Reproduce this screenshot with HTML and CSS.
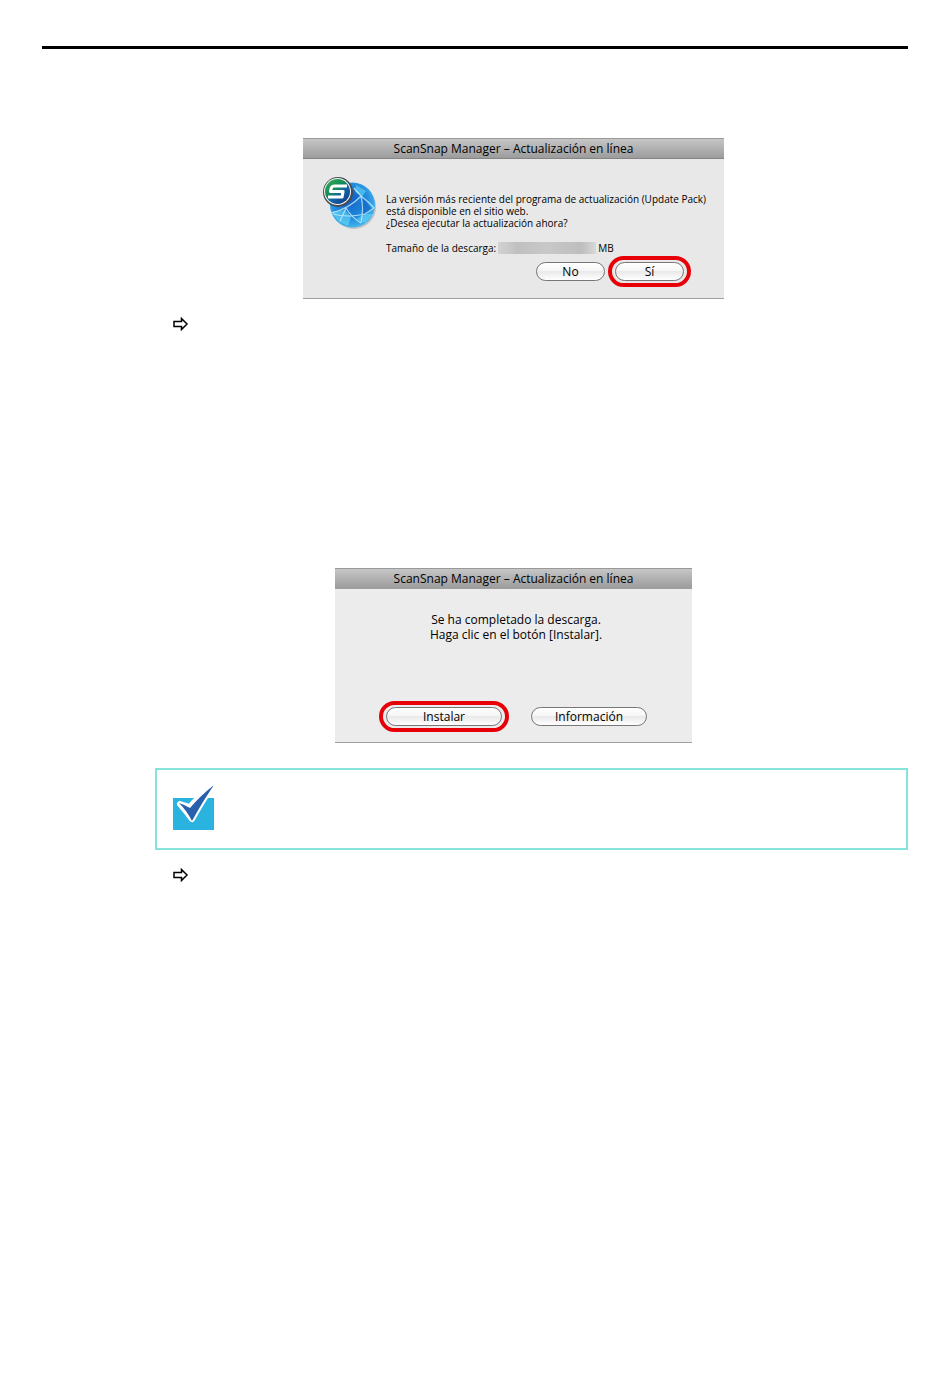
FILE: index.html
```html
<!DOCTYPE html>
<html lang="es">
<head>
<meta charset="UTF-8">
<meta name="viewport" content="width=device-width, initial-scale=1.0">
<title>ScanSnap Manager – Actualización en línea</title>
<link rel="stylesheet" href="styles.css">
</head>
<body>

<hr class="rule">

<main class="content">
    <section class="step">
        <div class="dialog dialog-update">
            <div class="titlebar">ScanSnap Manager – Actualización en línea</div>
            <div class="dialog-body">
                <svg class="globe" viewBox="0 0 56 56" aria-hidden="true">
                    <defs>
                        <radialGradient id="sea" cx="45%" cy="42%" r="60%">
                            <stop offset="0" stop-color="#1467c8"/>
                            <stop offset="0.6" stop-color="#1f88dc"/>
                            <stop offset="1" stop-color="#45b8ee"/>
                        </radialGradient>
                        <linearGradient id="badge" x1="0" y1="0" x2="0.8" y2="1">
                            <stop offset="0" stop-color="#35b34a"/>
                            <stop offset="0.45" stop-color="#148a5c"/>
                            <stop offset="0.65" stop-color="#1464a8"/>
                            <stop offset="1" stop-color="#123f8c"/>
                        </linearGradient>
                    </defs>
                    <ellipse cx="31" cy="30" rx="22" ry="22" fill="#a4a8ac" opacity="0.6"/>
                    <circle cx="29.5" cy="28" r="22.5" fill="url(#sea)"/>
                    <path d="M8 35l14-2 6 7-3 9-9-4zM33 8l10 6-4 6-7-4zM41 37l9 0-8 9-8-4z" fill="#68d8f6" opacity="0.6"/>
                    <path d="M29 12l9 7-12 12-8-2 2-10zM40 21l9 11-9 6-3-10z" fill="#1260c4" opacity="0.6"/>
                    <path d="M8 36Q26 32 38 19M31 11L38 19Q46 25 51 31M38 19Q41 31 38 46M10 37Q24 41 42 37L51 31M23 31Q28 40 38 46M23 31L17 44" fill="none" stroke="#c6effb" stroke-width="1.2" opacity="0.8"/>
                    <circle cx="15" cy="15" r="15" fill="#454c50"/>
                    <circle cx="14.5" cy="14.5" r="13.5" fill="#f5f5f5"/>
                    <circle cx="14.5" cy="14.5" r="12.5" fill="url(#badge)"/>
                    <path d="M24 9H11Q8 9 7.500 14.500H20L19 20H5" fill="none" stroke="#fff" stroke-width="3.2" stroke-linejoin="round"/>
                </svg>
                <div class="message">
                    <p>La versión más reciente del programa de actualización (Update Pack)<br>está disponible en el sitio web.<br>¿Desea ejecutar la actualización ahora?</p>
                    <p class="size">Tamaño de la descarga:<span class="hidden-size"></span>MB</p>
                </div>
            </div>
            <div class="buttons">
                <button type="button">No</button>
                <button type="button" class="marked">Sí</button>
            </div>
        </div>
        <div class="result">
            <svg class="arrow" viewBox="0 0 16 14" aria-hidden="true"><path d="M1 4.5H8.5V1.5L14 7L8.5 12.5V9.5H1Z"/></svg>
        </div>
    </section>

    <section class="step">
        <div class="dialog dialog-install">
            <div class="titlebar">ScanSnap Manager – Actualización en línea</div>
            <p class="done">Se ha completado la descarga.<br>Haga clic en el botón [Instalar].</p>
            <div class="buttons">
                <button type="button" class="marked">Instalar</button>
                <button type="button">Información</button>
            </div>
        </div>
        <div class="note">
            <svg class="check" viewBox="0 0 44 46" aria-hidden="true">
                <path d="M0 12H41V44H0Z" fill="#2ab3df"/>
                <path d="M7 18L17 21Q26 10 38 2Q29 15 19 33Q14 26 7 18Z" fill="#fff" stroke="#fff" stroke-width="6" stroke-linejoin="round"/>
                <path d="M6 17Q12 19 17 22Q27 10 41 -1Q30 15 19 35Q14 25 6 17Z" fill="#2960ad"/>
            </svg>
        </div>
        <div class="result">
            <svg class="arrow" viewBox="0 0 16 14" aria-hidden="true"><path d="M1 4.5H8.5V1.5L14 7L8.5 12.5V9.5H1Z"/></svg>
        </div>
    </section>
</main>

</body>
</html>
```

FILE: styles.css
```css
body {
    margin: 0;
    padding: 46px 42px;
    background: #fff;
    color: #000;
    font-family: "Open Sans", "Noto Sans", sans-serif;
    font-size: 12px;
}

p {
    margin: 0;
}

.rule {
    height: 3px;
    margin: 0;
    border: 0;
    background: #000;
}

.content {
    padding: 89px 0 0 77px;
}

.step + .step {
    margin-top: 237px;
}

/* Dialog windows */
.dialog {
    box-sizing: border-box;
    margin: 0 auto;
    border-bottom: 1px solid #a0a0a0;
}

.dialog-update {
    max-width: 421px;
    background: #e8e8e8;
}

.dialog-install {
    max-width: 357px;
    background: #ececec;
}

.titlebar {
    border-top: 1px solid #999;
    border-bottom: 1px solid #858585;
    background: linear-gradient(#c6c6c6, #9c9c9c);
    line-height: 19px;
    text-align: center;
}

.dialog-install .titlebar {
    border-bottom-color: #a0a0a0;
}

.dialog-body {
    display: flex;
    gap: 7px;
    padding: 18px 0 0 20px;
}

.globe {
    flex: none;
    width: 56px;
    height: 56px;
}

.message {
    padding-top: 16px;
    font-size: 10px;
    line-height: 12px;
    white-space: nowrap;
}

.size {
    display: flex;
    margin-top: 13px;
}

.hidden-size {
    width: 98px;
    margin: 0 2px;
    background: linear-gradient(90deg, #d2d2d2, #c0c0c0 20%, #c8c8c8 50%, #bebebe 85%, #d8d8d8);
}

.buttons {
    display: flex;
}

.dialog-update .buttons {
    justify-content: flex-end;
    gap: 10px;
    padding: 8px 40px 17px 0;
}

.dialog-install .buttons {
    justify-content: center;
    gap: 29px;
    padding: 65px 0 16px 6px;
}

button {
    position: relative;
    width: 69px;
    height: 19px;
    padding: 0;
    border: 1px solid #777;
    border-radius: 10px;
    background: linear-gradient(#fff, #f6f6f6 45%, #e9e9e9 50%, #fff);
    color: #000;
    font: inherit;
    line-height: 17px;
}

.dialog-install button {
    width: 116px;
}

/* Red ring around the button to press */
.marked::after {
    content: "";
    position: absolute;
    inset: -7px -8px;
    border: 4px solid #e80008;
    border-radius: 16px;
}

.done {
    padding: 23px 0 0 5px;
    line-height: 15px;
    text-align: center;
}

.result {
    display: flex;
    padding: 18px 0 0 54px;
}

.arrow {
    width: 16px;
    height: 14px;
    fill: #fff;
    stroke: #000;
    stroke-width: 1.5;
}

.note {
    margin: 25px 0 0 36px;
    padding: 16px;
    border: 2px solid #84e3da;
}

.check {
    display: block;
    width: 44px;
    height: 46px;
}
```
